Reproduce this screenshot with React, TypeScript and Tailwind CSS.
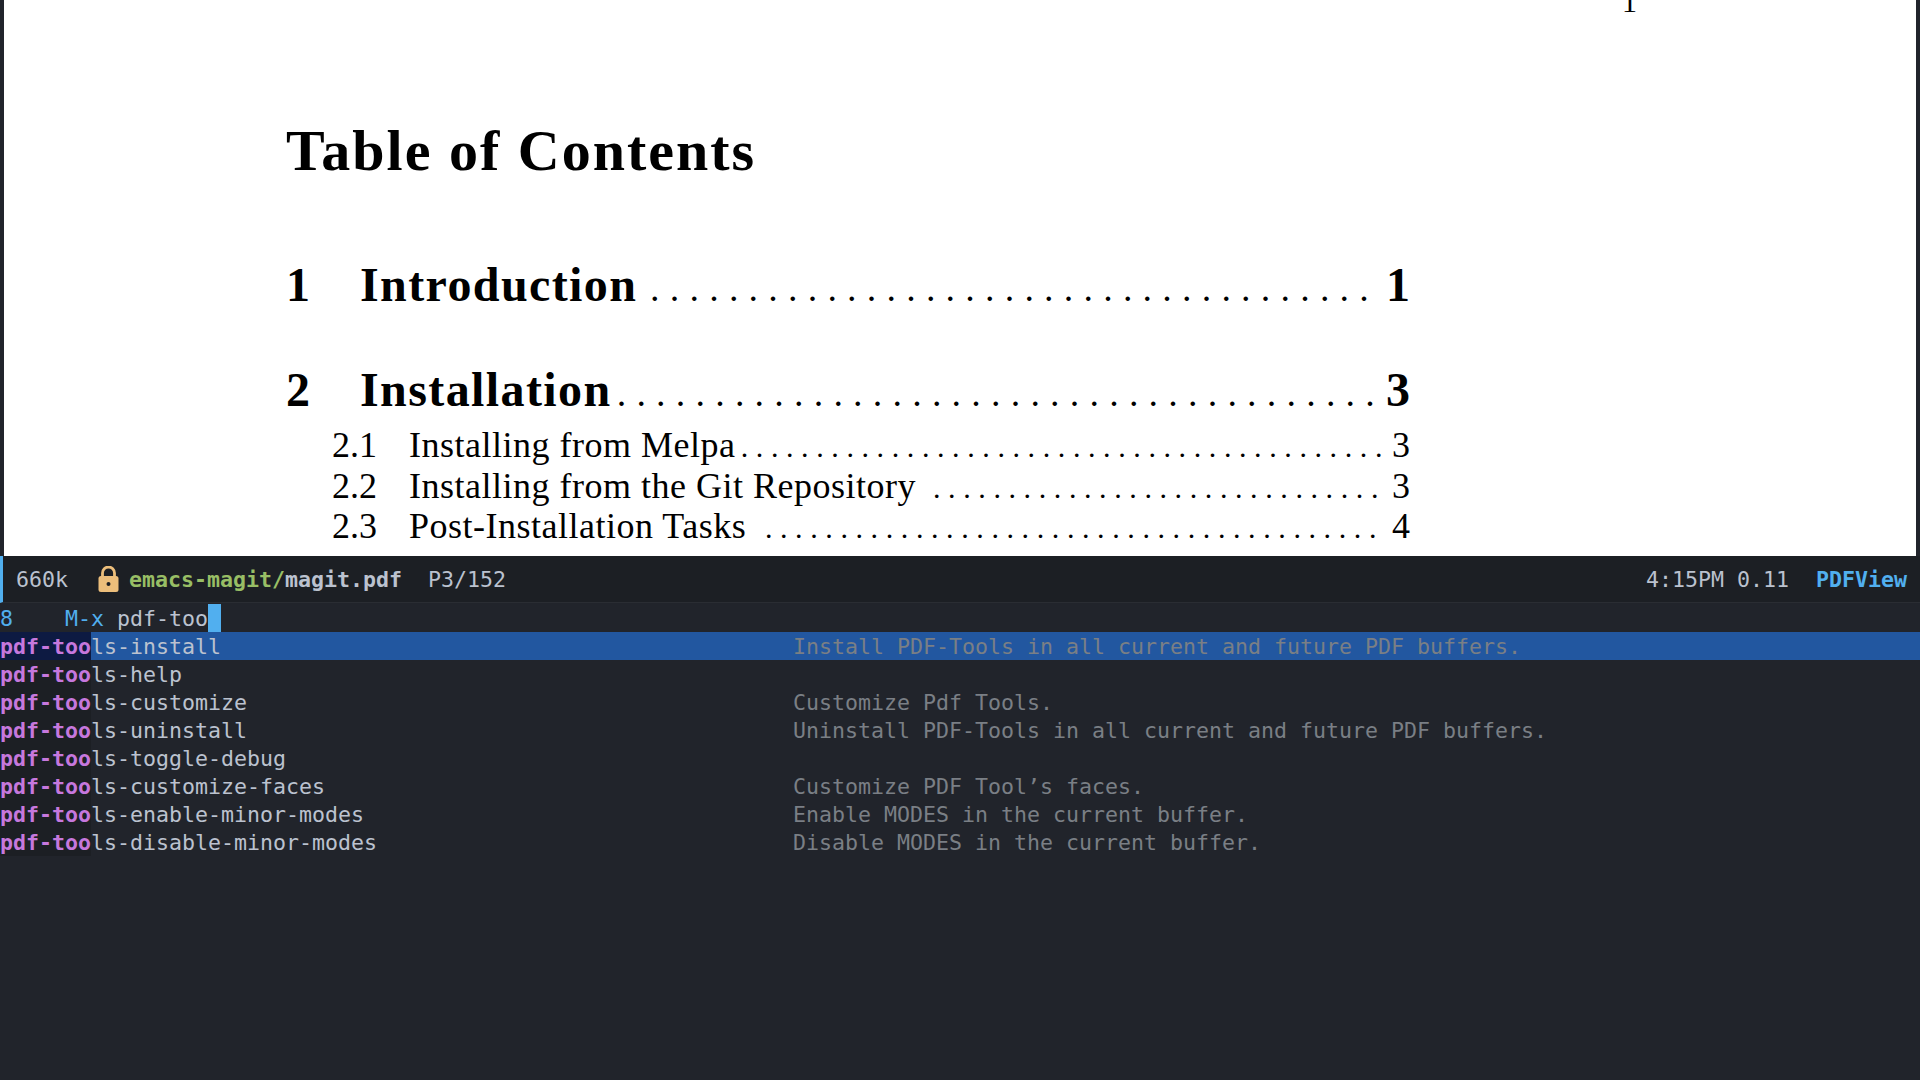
const TocSection = ({ num, title, page, dots, gap, className }: { num: string; title: string; page: string; dots: number; gap: string; className: string }) => (
  <div className={`flex items-baseline font-bold text-[48px] leading-[46px] ${className}`}>
    <span className="w-[74px]">{num}</span>
    <span className="tracking-[1.4px]">{title}</span>
    <span className={`ml-auto font-normal text-[38px] leading-none tracking-[10.2px] whitespace-nowrap ${gap}`}>{".".repeat(dots)}</span>
    <span>{page}</span>
  </div>
);

const TocSub = ({ num, title, page, dots, gap }: { num: string; title: string; page: string; dots: number; gap: string }) => (
  <div className="flex items-baseline ml-[46px] text-[36px] leading-[40.5px]">
    <span className="w-[77px]">{num}</span>
    <span className="tracking-[0.5px]">{title}</span>
    <span className={`ml-auto text-[30px] leading-none tracking-[7.6px] whitespace-nowrap ${gap}`}>{".".repeat(dots)}</span>
    <span>{page}</span>
  </div>
);

const candidates = [
  { rest: "ls-install", doc: "Install PDF-Tools in all current and future PDF buffers." },
  { rest: "ls-help", doc: "" },
  { rest: "ls-customize", doc: "Customize Pdf Tools." },
  { rest: "ls-uninstall", doc: "Uninstall PDF-Tools in all current and future PDF buffers." },
  { rest: "ls-toggle-debug", doc: "" },
  { rest: "ls-customize-faces", doc: "Customize PDF Tool’s faces." },
  { rest: "ls-enable-minor-modes", doc: "Enable MODES in the current buffer." },
  { rest: "ls-disable-minor-modes", doc: "Disable MODES in the current buffer." },
];

export default function App() {
  return (
    <div className="w-[1920px] h-[1080px] overflow-hidden flex flex-col bg-[#21242b] font-['DejaVu_Sans_Mono','Liberation_Mono',monospace] text-[21.6px] text-[#bbc2cf]">
      {/* pdf page */}
      <div className="h-[556px] mx-[4px] bg-white text-black font-['Liberation_Serif',serif] overflow-hidden">
        <div className="flex justify-end pr-[279px] -mt-[13px] h-[30px] text-[30px] leading-[30px]">1</div>
        <div className="ml-[282px] w-[1124px]">
          <h1 className="mt-[102px] font-bold text-[58px] leading-[64px] tracking-[2px]">Table of Contents</h1>
          <TocSection num="1" title="Introduction" page="1" dots={37} gap="mr-[7px]" className="mt-[79px]" />
          <TocSection num="2" title="Installation" page="3" dots={39} gap="mr-px" className="mt-[59px]" />
          <div className="mt-[12px]">
            <TocSub num="2.1" title="Installing from Melpa" page="3" dots={43} gap="mr-[2px]" />
            <TocSub num="2.2" title="Installing from the Git Repository" page="3" dots={30} gap="mr-[6px]" />
            <TocSub num="2.3" title="Post-Installation Tasks" page="4" dots={41} gap="mr-[8px]" />
          </div>
        </div>
      </div>

      {/* modeline */}
      <div className="h-[47px] flex items-center bg-[#1c1f24] border-l-[3px] border-l-[#51afef] border-b border-b-[#2a2d33] pt-[2px] pl-[13px] pr-[13px]">
        <span>660k</span>
        <svg className="ml-[30px] mr-[10px] -mt-[2px]" width="21" height="26" viewBox="0 0 21 26">
          <path d="M4.5 12V7a6 6 0 0 1 12 0v5" fill="none" stroke="#ecbe7b" strokeWidth="2.8" />
          <rect x="0.5" y="10" width="20" height="16" rx="2.5" fill="#ecbe7b" />
          <circle cx="10.5" cy="18" r="2" fill="#1c1f24" />
        </svg>
        <span className="font-bold text-[#98be65]">emacs-magit/</span>
        <span className="font-bold">magit.pdf</span>
        <span className="ml-[26px]">P3/152</span>
        <span className="ml-auto mr-px">4:15PM 0.11</span>
        <span className="ml-[26px] font-bold text-[#51afef]">PDFView</span>
      </div>

      {/* minibuffer prompt */}
      <div className="h-[28px] mt-px flex whitespace-pre leading-[30px]">
        <span className="text-[#51afef]">8    M-x </span>
        <span>pdf-too</span>
        <span className="w-[13px] h-[28px] bg-[#51afef]" />
      </div>

      {/* candidates */}
      <ul>
        {candidates.map((c, i) => (
          <li key={c.rest} className={`h-[28px] flex leading-[30px] whitespace-pre ${i === 0 ? "bg-[#2257a0]" : ""}`}>
            <span className={`font-bold text-[#c678dd] ${i === 0 ? "bg-[#0d1a42]" : "bg-[#1c1f24]"}`}>pdf-too</span>
            <span className="w-[702px]">{c.rest}</span>
            <span className="text-[#7a7f85]">{c.doc}</span>
          </li>
        ))}
      </ul>
    </div>
  );
}
